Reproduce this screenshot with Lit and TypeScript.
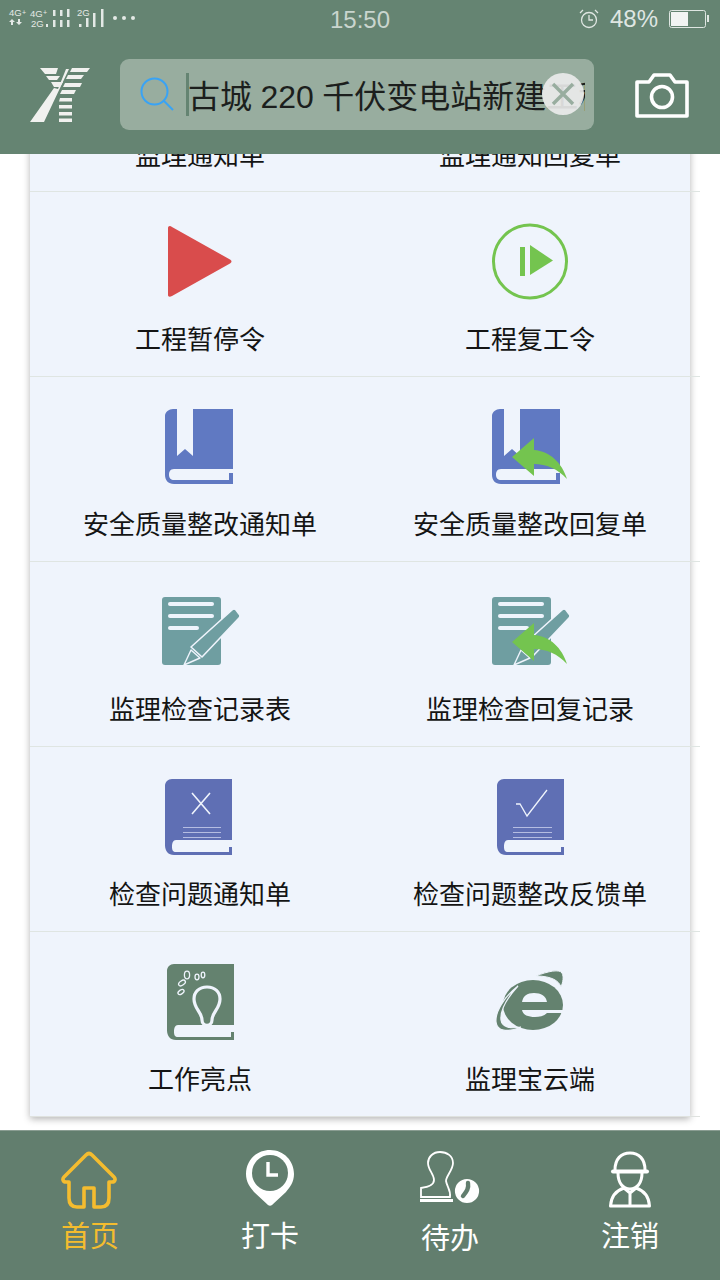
import {css, html, LitElement, svg} from 'lit';
import {customElement} from 'lit/decorators.js';

const BLUE = '#6079c2';
const INDIGO = '#5f6fb4';
const TEAL = '#6f9ea1';
const SAGE = '#64826f';
const GREEN = '#74c44f';
const PAPER = '#eff4fc';

/** Green reply arrow laid over the "reply" variants of the icons. */
const replyArrow = svg`<path fill="${GREEN}" d="M22 50 L44 31 V43 C60 44 72 56 77 72 C68 62 56 57 44 57 V69 Z"/>`;

const plainBook = (fill: string, dx = 0) => svg`
  <path transform="translate(${dx} 0)" fill="${fill}" d="M12 2 H72 V63 H16 C13 63 12 66 12 70 C12 73 13 75 16 75 H69 V70 H72 V78 H14 C8 78 5 74 5 68 V9 C5 5 8 2 12 2 Z"/>`;

const ruledLines = (x1: number, x2: number) => svg`
  <path fill="none" stroke="#b5bde2" stroke-width="1" d="M${x1} 50.5 H${x2} M${x1} 55.5 H${x2} M${x1} 60.5 H${x2}"/>`;

const ribbonBook = (dx = 0) => svg`
  <path transform="translate(${dx} 0)" fill="${BLUE}" d="M13 2 H17 V49 L25 42 L33 49 V2 H73 V62 H14 C10 62 9 65 9 68 C9 71 11 73 14 73 H69 V66 H73 V77 H14 C8 77 5 73 5 68 V9 C5 5 9 2 13 2 Z"/>`;

const icons = {
  stop: svg`<path fill="#d94c4c" d="M8 6 C8 4 10 3 12 5 L70 37.5 C72 39 72 40 70 41.5 L12 74 C10 75 8 75 8 73 Z"/>`,
  resume: svg`
    <circle cx="40" cy="39.5" r="36.5" fill="none" stroke="${GREEN}" stroke-width="3"/>
    <rect x="30" y="25" width="5" height="29" fill="${GREEN}"/>
    <path fill="${GREEN}" d="M40 23 L63 38.5 L40 53 Z"/>`,
  note: svg`
    <rect x="2" y="5" width="59" height="68" rx="3" fill="${TEAL}"/>
    <rect x="8" y="10" width="46" height="4" rx="2" fill="${PAPER}"/>
    <rect x="8" y="22" width="46" height="4" rx="2" fill="${PAPER}"/>
    <rect x="8" y="34" width="31" height="4" rx="2" fill="${PAPER}"/>
    <path fill="${TEAL}" stroke="${PAPER}" stroke-width="1.6" stroke-linejoin="round" d="M31 55 L72 18 C73 17 75 17 76 18 L79 22 C80 23 80 25 79 26 L42 65 Z"/>
    <path fill="${TEAL}" stroke="${PAPER}" stroke-width="1.4" stroke-linejoin="round" d="M31 58 L40 66 L24 73 Z"/>`,
  xBook: svg`
    ${plainBook(INDIGO)}
    <path fill="none" stroke="${PAPER}" stroke-width="1.6" d="M32 16 L50 37 M50 16 L32 37"/>
    ${ruledLines(23, 61)}`,
  checkBook: svg`
    ${plainBook(INDIGO, 2)}
    <path fill="none" stroke="${PAPER}" stroke-width="1.3" d="M26 27 H30 L37 39 L57 13"/>
    ${ruledLines(23, 62)}`,
  bulbBook: svg`
    ${plainBook(SAGE, 2)}
    <path fill="none" stroke="${PAPER}" stroke-width="3.2" d="M42 58 C42 50 34 47 34 37 C34 30 39 25 47 25 C55 25 60 30 60 37 C60 47 52 50 52 58 C52 65 42 65 42 58 Z"/>
    <g fill="none" stroke="${PAPER}" stroke-width="1.3">
      <ellipse cx="21" cy="30" rx="3.4" ry="2" transform="rotate(-35 21 30)"/>
      <ellipse cx="22" cy="21" rx="3.8" ry="2.2" transform="rotate(-35 22 21)"/>
      <ellipse cx="27" cy="13" rx="2.6" ry="3.8"/>
      <ellipse cx="37" cy="15" rx="2" ry="2.8"/>
      <ellipse cx="43" cy="13" rx="1.8" ry="2.8"/>
    </g>`,
  ie: svg`
    <ellipse cx="43" cy="43" rx="30" ry="25" fill="${SAGE}"/>
    <path fill="${PAPER}" d="M32 40 C33 34 37 31 44 31 C51 31 56 34 57 40 Z"/>
    <path fill="${PAPER}" d="M32 48 H76 V51 H57 C54 54 49 55 45 55 C38 55 33 53 32 48 Z"/>
    <path fill="${SAGE}" stroke="${PAPER}" stroke-width="1" d="M46 14 C58 9 70 7 72 11 C74 15 73 20 71 25 C69 19 62 14 46 14 Z"/>
    <path fill="${SAGE}" stroke="${PAPER}" stroke-width="1.2" d="M28 24 C14 35 5 50 6 60 C7 69 17 71 31 65 C20 67 12 65 11 58 C10 48 18 35 28 24 Z"/>`,
};

interface Tile {
  label: string;
  icon: unknown;
}

const rows: Tile[][] = [
  [
    {label: '工程暂停令', icon: icons.stop},
    {label: '工程复工令', icon: icons.resume},
  ],
  [
    {label: '安全质量整改通知单', icon: ribbonBook()},
    {label: '安全质量整改回复单', icon: svg`${ribbonBook(-3)}${replyArrow}`},
  ],
  [
    {label: '监理检查记录表', icon: icons.note},
    {label: '监理检查回复记录', icon: svg`${icons.note}${replyArrow}`},
  ],
  [
    {label: '检查问题通知单', icon: icons.xBook},
    {label: '检查问题整改反馈单', icon: icons.checkBook},
  ],
  [
    {label: '工作亮点', icon: icons.bulbBook},
    {label: '监理宝云端', icon: icons.ie},
  ],
];

@customElement('app-root')
export class AppRoot extends LitElement {
  static override styles = css`
    :host {
      display: block;
      width: 720px;
      height: 1280px;
      overflow: hidden;
      position: relative;
      background: #fff;
      font-family: 'Noto Sans CJK SC', 'Liberation Sans', sans-serif;
    }

    .top {
      height: 154px;
      background: #658472;
      position: relative;
      z-index: 2;
      overflow: hidden;
    }

    .status {
      height: 40px;
      display: flex;
      align-items: center;
      position: relative;
      color: #dfe6e2;
      font-family: 'Liberation Sans', sans-serif;
    }

    .signal {
      position: absolute;
      left: 0;
      top: 0;
      display: block;
    }

    .clock {
      position: absolute;
      left: 330px;
      top: 5px;
      font-size: 24px;
      line-height: 30px;
      color: #c9d5ce;
    }

    .status-right {
      margin-left: auto;
      margin-right: 11px;
      display: flex;
      align-items: center;
      gap: 11px;
      font-size: 24px;
      margin-top: -3px;
    }

    .bar {
      height: 114px;
      display: flex;
      align-items: flex-start;
    }

    .logo {
      margin: 28px 0 0 30px;
      display: block;
    }

    .search {
      margin: 19px 0 0 30px;
      width: 474px;
      height: 71px;
      border-radius: 9px;
      background: #98ad9f;
      position: relative;
      display: flex;
      align-items: center;
      flex: none;
    }

    .search-icon {
      margin-left: 20px;
      display: block;
      flex: none;
    }

    .caret {
      width: 3px;
      height: 43px;
      background: #658472;
      margin-left: 12px;
      flex: none;
    }

    .query {
      width: 397px;
      overflow: hidden;
      flex: none;
      font-family: 'Liberation Sans', 'Noto Sans CJK SC', sans-serif;
      font-size: 32px;
      line-height: 40px;
      word-spacing: -0.5px;
      color: #1c1f1d;
      white-space: nowrap;
      margin: 4px 0 0 -1px;
    }

    .clear {
      position: absolute;
      left: 422px;
      top: 14px;
      width: 42px;
      height: 42px;
      border-radius: 50%;
      background: rgba(236, 236, 236, 0.9);
    }

    .clear svg {
      display: block;
    }

    .camera {
      margin: 33px 0 0 40px;
      display: block;
      flex: none;
    }

    .scroll {
      position: absolute;
      left: 0;
      right: 0;
      top: 154px;
      height: 976px;
      overflow: hidden;
    }

    .card {
      margin: -147px 30px 0 30px;
      width: 660px;
      background: #eff4fc;
      box-shadow: 0 2px 7px rgba(0, 0, 0, 0.3);
    }

    .row {
      width: 665px;
      height: 184px;
      box-sizing: content-box;
      padding-left: 5px;
      display: grid;
      grid-template-columns: 330px 330px;
    }

    .row + .row {
      border-top: 1px solid #dfe5e2;
    }

    .row:last-child {
      border-bottom: 1px solid #dfe2df;
    }

    .tile {
      display: flex;
      flex-direction: column;
      align-items: center;
      min-width: 0;
    }

    .tile svg {
      display: block;
      margin-top: 30px;
    }

    .label {
      margin-top: 18px;
      font-size: 26px;
      line-height: 36px;
      color: #141414;
      white-space: nowrap;
    }

    .peek .label {
      margin-top: 129px;
    }

    .nav {
      position: absolute;
      left: 0;
      right: 0;
      top: 1130px;
      height: 150px;
      background: #627e6e;
      border-top: 1px solid #8a9d92;
      box-sizing: border-box;
      display: grid;
      grid-template-columns: repeat(4, 180px);
    }

    .nav-item {
      display: flex;
      flex-direction: column;
      align-items: center;
      color: #fff;
      font-size: 29px;
      line-height: 36px;
    }

    .nav-item.active {
      color: #f4bc2f;
    }

    .nav-item svg {
      display: block;
      margin-top: 19px;
      height: 62px;
    }

    .nav-item span {
      margin-top: 4px;
    }

    .nav-item.low span {
      margin-top: 6px;
    }
  `;

  private renderStatus() {
    return html`
      <div class="status">
        <svg class="signal" width="145" height="32" viewBox="0 0 145 32">
          <g fill="#e4e9e6" font-family="Liberation Sans, sans-serif" font-size="9.5">
            <text x="9" y="16">4G</text>
            <text x="22" y="15" font-size="7">+</text>
            <text x="30" y="17">4G</text>
            <text x="43" y="15" font-size="7">+</text>
            <text x="31" y="27">2G</text>
            <text x="77" y="16">2G</text>
            <path d="M11 25 V22 H9 L12 19 L15 22 H13 V25 Z M18 19 V22 H16 L19 25 L22 22 H20 V19 Z"/>
            <rect x="46" y="24" width="2" height="3"/>
            <rect x="53" y="10" width="2.5" height="6"/>
            <rect x="53" y="20" width="2.5" height="7"/>
            <rect x="60" y="10" width="2.5" height="6"/>
            <rect x="60" y="20" width="2.5" height="7"/>
            <rect x="67" y="9" width="2.5" height="8"/>
            <rect x="67" y="20" width="2.5" height="7"/>
            <rect x="79" y="24" width="2.5" height="3"/>
            <rect x="86" y="18" width="2.5" height="9"/>
            <rect x="93" y="13" width="2.5" height="14"/>
            <rect x="101" y="9" width="2.5" height="18"/>
            <circle cx="115" cy="18" r="2"/>
            <circle cx="124" cy="18" r="2"/>
            <circle cx="133" cy="18" r="2"/>
          </g>
        </svg>
        <div class="clock">15:50</div>
        <div class="status-right">
          <svg width="20" height="20" viewBox="0 0 20 20" fill="none" stroke="#dfe6e2" stroke-width="1.3">
            <circle cx="10" cy="11" r="7.5"/>
            <path d="M10 6 V11 H14 M1 4 L4 1 M19 4 L16 1"/>
          </svg>
          <span>48%</span>
          <svg width="40" height="18" viewBox="0 0 40 18">
            <rect x=".5" y=".5" width="36" height="17" rx="2" fill="none" stroke="#dfe6e2"/>
            <rect x="2" y="2" width="17" height="14" fill="#f2f4f3"/>
            <rect x="38" y="5" width="2" height="7" fill="#dfe6e2"/>
          </svg>
        </div>
      </div>
    `;
  }

  private renderBar() {
    return html`
      <div class="bar">
        <svg class="logo" width="60" height="56" viewBox="0 0 60 56">
          <g fill="#f1f1ef">
            <path d="M10 0 H28 L26 6 H15 Z M16 8 H30 L27 12 H19 Z M21 14 H33 L30 19 H24 Z"/>
            <path d="M42 0 H60 L57 4 H40 Z M38 7 H54 L51 11 H36 Z M35 15 H52 L50 19 H33 Z M32 22 H46 L44 26 H30 Z"/>
            <path d="M36 1 H39 L14 54 H0 L24 20 L28 21 Z"/>
            <path d="M30 30 H42 V33.5 H29 Z M29 37 H42 V40.5 H29 Z M29 44 H42 V47.5 H29 Z M29 50.5 H42 V54 H29 Z"/>
          </g>
        </svg>
        <div class="search">
          <svg class="search-icon" width="34" height="36" viewBox="0 0 34 36" fill="none" stroke="#39a3f5" stroke-width="2">
            <circle cx="14.5" cy="14.5" r="13"/>
            <path d="M24 24 L33 33"/>
          </svg>
          <div class="caret"></div>
          <div class="query">古城 220 千伏变电站新建工程</div>
          <div class="clear">
            <svg width="42" height="42" viewBox="0 0 42 42" fill="none" stroke="#98ad9f" stroke-width="3.4">
              <path d="M11 11 L31 31 M31 11 L11 31"/>
            </svg>
          </div>
        </div>
        <svg class="camera" width="56" height="46" viewBox="0 0 56 46" fill="none" stroke="#fff" stroke-width="3.6">
          <path d="M3 9 H15 L20 2 H36 L41 9 H53 V43 H3 Z" stroke-linejoin="round"/>
          <circle cx="28" cy="24" r="10.5"/>
        </svg>
      </div>
    `;
  }

  private renderNav() {
    return html`
      <nav class="nav">
        <div class="nav-item active">
          <svg width="60" height="62" viewBox="0 0 60 62" fill="none" stroke="#f4bc2f" stroke-width="3.6" stroke-linejoin="round">
            <path d="M26 5 C28 3 30 3 32 5 L54 27 C56 29 55 32 52 32 H49 V48 C49 54 46 57 41 57 H34 V38 H24 V57 H17 C12 57 9 54 9 48 V32 H6 C3 32 2 29 4 27 Z"/>
          </svg>
          <span>首页</span>
        </div>
        <div class="nav-item">
          <svg width="50" height="62" viewBox="0 0 50 62">
            <path transform="translate(0 -1)" fill="#fff" d="M25 1 C11 1 1 12 1 25 C1 33 5 38 9 43 L23 56 C24 57 26 57 27 56 L41 43 C45 38 49 33 49 25 C49 12 39 1 25 1 Z"/>
            <circle cx="25" cy="23" r="18" fill="#627e6e"/>
            <path fill="none" stroke="#fff" stroke-width="3.4" d="M23 12 V25 H33"/>
          </svg>
          <span>打卡</span>
        </div>
        <div class="nav-item low">
          <svg width="62" height="62" viewBox="0 0 62 62" fill="none" stroke="#fff" stroke-width="1.8">
            <path d="M2 47 H31 C32 40 28 37 27 31 C27 26 34 20 34 13 C34 6 28 2 21 2 C14 2 9 7 9 13 C9 20 15 24 15 30 C15 35 10 37 2 38 Z"/>
            <path stroke-width="3" d="M1 50.5 H34"/>
            <circle cx="48" cy="41" r="13" fill="#fff" stroke="#627e6e"/>
            <path stroke="#627e6e" stroke-width="4.4" stroke-linecap="round" d="M49 33 C50 39 47 42 44 46"/>
          </svg>
          <span>待办</span>
        </div>
        <div class="nav-item">
          <svg width="46" height="62" viewBox="0 0 46 62" fill="none" stroke="#fff" stroke-width="3">
            <path d="M8 20 C8 9 14 3 23 3 C32 3 38 9 38 20"/>
            <path stroke-width="4" d="M6 21.5 H40" stroke-linecap="round"/>
            <path d="M11 23 C11 33 16 39 23 39 C30 39 35 33 35 23"/>
            <path d="M17 38 C8 41 4 48 3.5 56 H42.5 C42 48 38 41 29 38 M17 38 L23 43 L29 38 M23 43 V56" stroke-linejoin="round"/>
          </svg>
          <span>注销</span>
        </div>
      </nav>
    `;
  }

  override render() {
    return html`
      <div class="top">${this.renderStatus()}${this.renderBar()}</div>
      <div class="scroll">
        <div class="card">
          <div class="row peek">
            <div class="tile"><div class="label">监理通知单</div></div>
            <div class="tile"><div class="label">监理通知回复单</div></div>
          </div>
          ${rows.map(row => html`
            <div class="row">
              ${row.map(tile => html`
                <div class="tile">
                  <svg width="80" height="80" viewBox="0 0 80 80">${tile.icon}</svg>
                  <div class="label">${tile.label}</div>
                </div>
              `)}
            </div>
          `)}
        </div>
      </div>
      ${this.renderNav()}
    `;
  }
}

declare global {
  interface HTMLElementTagNameMap {
    'app-root': AppRoot;
  }
}
